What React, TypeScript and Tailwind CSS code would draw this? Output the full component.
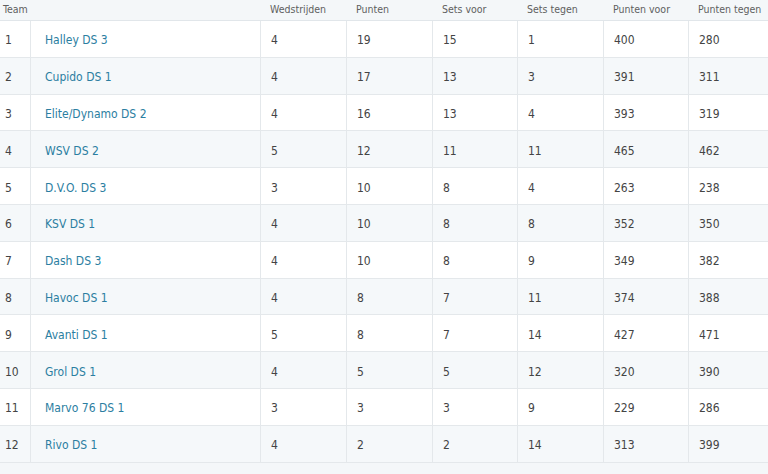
import React from "react";

const rows: [number, string, number, number, number, number, number, number][] = [
  [1, "Halley DS 3", 4, 19, 15, 1, 400, 280],
  [2, "Cupido DS 1", 4, 17, 13, 3, 391, 311],
  [3, "Elite/Dynamo DS 2", 4, 16, 13, 4, 393, 319],
  [4, "WSV DS 2", 5, 12, 11, 11, 465, 462],
  [5, "D.V.O. DS 3", 3, 10, 8, 4, 263, 238],
  [6, "KSV DS 1", 4, 10, 8, 8, 352, 350],
  [7, "Dash DS 3", 4, 10, 8, 9, 349, 382],
  [8, "Havoc DS 1", 4, 8, 7, 11, 374, 388],
  [9, "Avanti DS 1", 5, 8, 7, 14, 427, 471],
  [10, "Grol DS 1", 4, 5, 5, 12, 320, 390],
  [11, "Marvo 76 DS 1", 3, 3, 3, 9, 229, 286],
  [12, "Rivo DS 1", 4, 2, 2, 14, 313, 399],
];

const cols = "grid grid-cols-[30px_230px_86px_86px_85px_86px_85px_1fr]";

export default function App() {
  return (
    <div
      className="w-[768px] h-[474px] overflow-hidden bg-[#f4f7f9] text-[#444]"
      style={{ fontFamily: '"DejaVu Sans Condensed", "DejaVu Sans", sans-serif' }}
    >
      <div className={`${cols} h-[21px] items-center border-b border-[#e1e6ea] bg-[#f4f7f9] text-[10.5px] text-[#5f5f5f]`}>
        <div className="col-span-2 pl-[3px]">Team</div>
        <div className="pl-[10px]">Wedstrijden</div>
        <div className="pl-[10px]">Punten</div>
        <div className="pl-[10px]">Sets voor</div>
        <div className="pl-[10px]">Sets tegen</div>
        <div className="pl-[10px]">Punten voor</div>
        <div className="pl-[10px]">Punten tegen</div>
      </div>
      {rows.map((r, i) => (
        <div
          key={r[0]}
          className={`${cols} h-[36.8px] border-b border-[#e4e8eb] text-[12px] ${i % 2 === 0 ? "bg-white" : "bg-[#f5f8fa]"}`}
        >
          <div className="flex items-center pl-[5px] pt-[3px]">{r[0]}</div>
          <div className="flex items-center border-l border-[#e4e8eb] pl-[14px] pt-[3px] text-[#2b7ea1]">{r[1]}</div>
          {r.slice(2).map((v, j) => (
            <div key={j} className="flex items-center border-l border-[#e4e8eb] pl-[10px] pt-[3px]">
              {v}
            </div>
          ))}
        </div>
      ))}
    </div>
  );
}
